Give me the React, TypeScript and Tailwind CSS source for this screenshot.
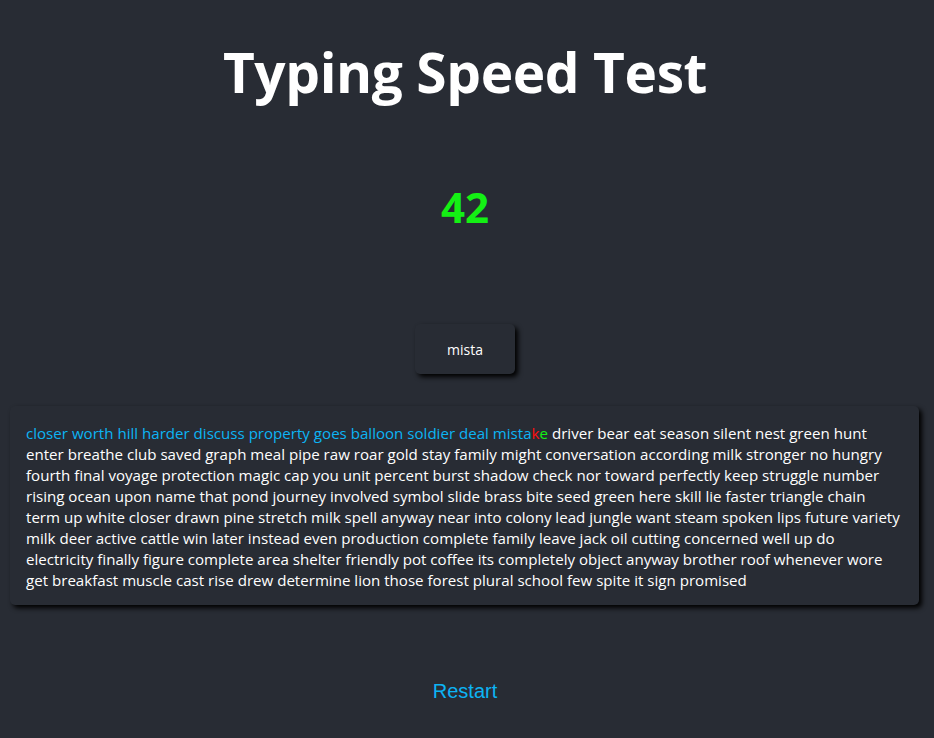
import React from "react";

const lines = [
  "enter breathe club saved graph meal pipe raw roar gold stay family might conversation according milk stronger no hungry",
  "fourth final voyage protection magic cap you unit percent burst shadow check nor toward perfectly keep struggle number",
  "rising ocean upon name that pond journey involved symbol slide brass bite seed green here skill lie faster triangle chain",
  "term up white closer drawn pine stretch milk spell anyway near into colony lead jungle want steam spoken lips future variety",
  "milk deer active cattle win later instead even production complete family leave jack oil cutting concerned well up do",
  "electricity finally figure complete area shelter friendly pot coffee its completely object anyway brother roof whenever wore",
  "get breakfast muscle cast rise drew determine lion those forest plural school few spite it sign promised",
];

export default function App() {
  return (
    <div className="min-h-[738px] w-full bg-[#282c34] text-white" style={{ fontFamily: '"Open Sans", "Noto Sans", sans-serif' }}>
      <div className="w-[930px] flex flex-col items-center">
        <h1 className="mt-[30px] text-[55px] leading-[84px] font-bold tracking-[-0.4px]">Typing Speed Test</h1>
        <div className="mt-[64px] text-[42px] leading-[58px] font-bold text-[#14f014]">42</div>
        <div className="mt-[88px] w-[100px] h-[50px] rounded-[5px] bg-[#282c34] shadow-[3px_3px_5px_#000] flex items-center justify-center text-[14px]">
          mista
        </div>
        <div className="mt-[32px] self-stretch ml-[10px] mr-[11px] rounded-[5px] bg-[#282c34] shadow-[3px_3px_5px_#000] px-[16px] pt-[17px] pb-[14px] text-[15.1px] leading-[21px] whitespace-nowrap">
          <div>
            <span className="text-[#0cb4f4]">closer worth hill harder discuss property goes balloon soldier deal mista</span>
            <span className="text-[#ff1010]">k</span>
            <span className="text-[#14f014]">e</span>
            <span> driver bear eat season silent nest green hunt</span>
          </div>
          {lines.map((l, i) => (
            <div key={i}>{l}</div>
          ))}
        </div>
        <div className="mt-[71px] text-[20px] text-[#0cb4f4]" style={{ fontFamily: '"Liberation Sans", Arial, sans-serif' }}>
          Restart
        </div>
      </div>
    </div>
  );
}
